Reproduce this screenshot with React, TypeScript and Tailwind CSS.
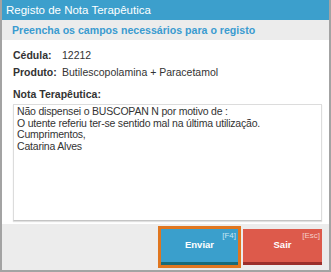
export default function App() {
  return (
    <div
      className="w-[331px] h-[272px] flex flex-col bg-white border-x-2 border-b-2 border-[#a3a3a3]"
      style={{ fontFamily: '"Liberation Sans", Arial, sans-serif' }}
    >
      <div className="h-[20px] bg-[#3c9fcc] text-white text-[11.5px] leading-[20px] pl-[4px]">
        Registo de Nota Terapêutica
      </div>
      <div className="h-[20px] bg-[#ececec] text-[#3a9bd0] font-bold text-[10.6px] leading-[20px] pl-[10px]">
        Preencha os campos necessários para o registo
      </div>

      <div className="flex-1 flex flex-col pl-[11px] pr-[7px] pt-[7px] pb-[3px] text-[10.5px] text-[#333]">
        <div className="flex h-[17px] items-center">
          <span className="w-[49px] font-bold">Cédula:</span>
          <span>12212</span>
        </div>
        <div className="flex h-[17px] items-center">
          <span className="w-[49px] font-bold">Produto:</span>
          <span>Butilescopolamina + Paracetamol</span>
        </div>
        <div className="mt-[5px] h-[17px] flex items-center font-bold">Nota Terapêutica:</div>
        <div className="mt-[1px] flex-1 border border-[#dcdcdc] border-b-[#c4c4c4] shadow-[0_1px_1px_rgba(0,0,0,0.12)] px-[3px] pt-[1px] leading-[11.7px] tracking-[-0.2px]">
          <p>Não dispensei o BUSCOPAN N por motivo de :</p>
          <p>O utente referiu ter-se sentido mal na última utilização.</p>
          <p>Cumprimentos,</p>
          <p>Catarina Alves</p>
        </div>
      </div>

      <div className="h-[46px] bg-[#ececec] flex justify-end items-center gap-[5px] pr-[7px]">
        <div className="ring-[3px] ring-[#e0761f] shadow-[0_1px_3px_rgba(0,0,0,0.4)]">
          <button className="relative w-[77px] h-[36px] bg-[#3a9fcc] border-b-[3px] border-[#176a78] text-white font-bold text-[9.5px]">
            <span className="absolute top-[1px] right-[2px] text-[8px] font-normal text-[#c9e6f3]">[F4]</span>
            Enviar
          </button>
        </div>
        <button className="relative w-[79px] h-[36px] bg-[#dd5a4b] border-b-[3px] border-[#9a2e2a] text-white font-bold text-[9.5px]">
          <span className="absolute top-[1px] right-[2px] text-[8px] font-normal text-[#f5cfc9]">[Esc]</span>
          Sair
        </button>
      </div>
    </div>
  );
}
